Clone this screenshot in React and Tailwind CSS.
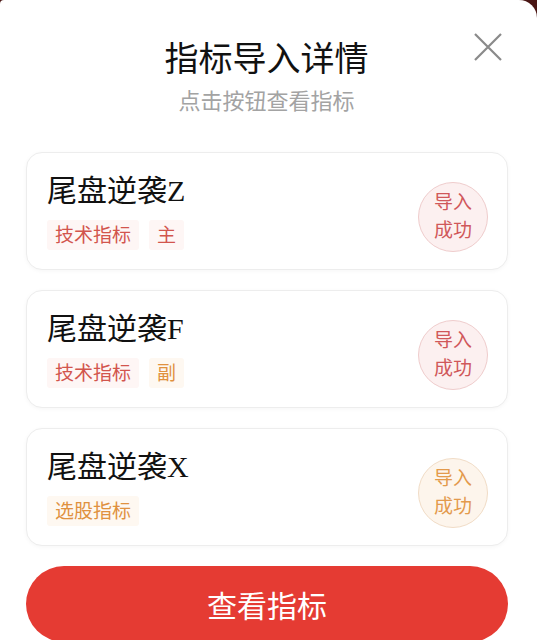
const items = [
  { name: "尾盘逆袭Z", tags: ["技术指标", "主"], tone: "red" },
  { name: "尾盘逆袭F", tags: ["技术指标", "副"], tone: "mixed" },
  { name: "尾盘逆袭X", tags: ["选股指标"], tone: "orange" },
];

const redTag = "bg-[#fef6f5] text-[#d2554d]";
const orangeTag = "bg-[#fef8f1] text-[#e0913f]";

function Tag({ label, className }) {
  return (
    <span className={`px-2 h-[30px] flex items-center text-[19px] leading-none rounded-[3px] ${className}`}>
      {label}
    </span>
  );
}

function Badge({ orange }) {
  return (
    <div
      className={`w-[70px] h-[70px] rounded-full border flex flex-col items-center justify-center text-[19px] leading-[28px] mt-[12px] ${
        orange
          ? "border-[#f1dcc6] bg-[#fdf5ec] text-[#e39a4c]"
          : "border-[#efcccc] bg-[#fcf0f0] text-[#d0585a]"
      }`}
    >
      <span>导入</span>
      <span>成功</span>
    </div>
  );
}

function IndicatorCard({ item }) {
  return (
    <div className="h-[118px] rounded-[16px] border border-[#ededed] bg-white shadow-[0_1px_4px_rgba(0,0,0,0.04)] flex items-center justify-between pl-[20px] pr-[19px]">
      <div className="flex flex-col self-start pt-[20px]">
        <div className="text-[30px] leading-[36px] text-[#111]">{item.name}</div>
        <div className="flex gap-[10px] mt-[11px]">
          {item.tags.map((t, i) => {
            let cls = redTag;
            if (item.tone === "orange") cls = orangeTag;
            if (item.tone === "mixed" && i === 1) cls = orangeTag;
            return <Tag key={t} label={t} className={cls} />;
          })}
        </div>
      </div>
      <Badge orange={item.tone === "orange"} />
    </div>
  );
}

export default function App() {
  return (
    <div
      className="w-[537px] h-[640px] overflow-hidden bg-[#4a1614]"
      style={{ fontFamily: '"Liberation Serif", "Noto Sans CJK SC", sans-serif' }}
    >
      <div className="relative w-[537px] h-[640px] bg-white rounded-tl-[4px] rounded-tr-[18px] flex flex-col">
        {/* Close */}
        <button className="absolute left-[474px] top-[33px] w-[28px] h-[28px] text-[#8a8a8a]">
          <svg viewBox="0 0 28 28" className="w-full h-full" fill="none" stroke="currentColor" strokeWidth="2.2">
            <path d="M1 1L27 27M27 1L1 27" />
          </svg>
        </button>

        {/* Header */}
        <div
          className="pt-[37px] flex flex-col items-center pr-[4px]"
          style={{ fontFamily: '"Noto Sans CJK SC", sans-serif' }}
        >
          <h1 className="text-[34px] leading-[40px] text-[#111] font-normal">指标导入详情</h1>
          <p className="text-[22px] leading-[28px] text-[#a3a3a3] mt-[8px]">点击按钮查看指标</p>
        </div>

        {/* Cards */}
        <div className="mt-[39px] pl-[26px] pr-[29px] flex flex-col gap-[20px]">
          {items.map((item) => (
            <IndicatorCard key={item.name} item={item} />
          ))}
        </div>

        {/* Button */}
        <div className="mt-[20px] pl-[26px] pr-[29px]">
          <button
            className="w-full h-[76px] rounded-full bg-[#e53b33] text-white text-[30px] leading-none flex items-center justify-center"
            style={{ fontFamily: '"Noto Sans CJK SC", sans-serif' }}
          >
            查看指标
          </button>
        </div>
      </div>
    </div>
  );
}
